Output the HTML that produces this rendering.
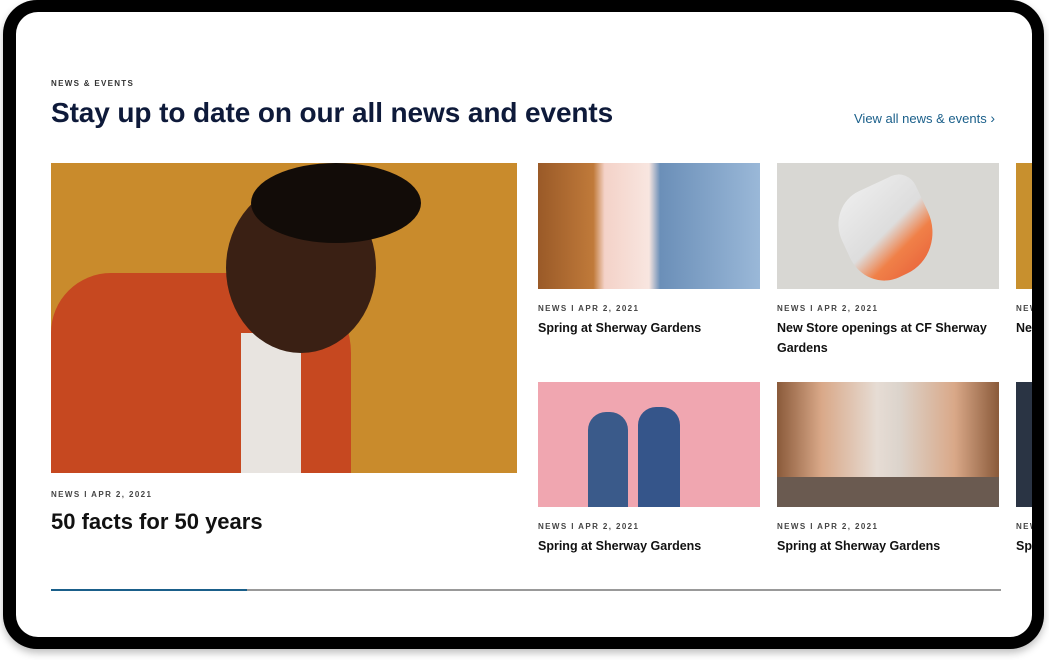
<!DOCTYPE html>
<html><head><style>
html,body{margin:0;padding:0;background:#fff;width:1049px;height:660px;overflow:hidden;font-family:"Liberation Sans",sans-serif}
.frame{position:absolute;left:3px;top:0;width:1041px;height:649px;background:#000;border-radius:34px;box-shadow:0 4px 8px rgba(0,0,0,.25)}
.screen{position:absolute;left:16px;top:12px;width:1016px;height:625px;background:#fff;border-radius:22px;overflow:hidden}
.a{position:absolute}
.eyebrow{left:35px;top:67px;font-size:8px;letter-spacing:1.3px;color:#333;font-weight:bold}
h1{position:absolute;left:35px;top:85px;margin:0;font-size:28px;color:#0e1a3a;font-weight:bold;letter-spacing:-.1px}
.view{left:838px;top:98px;font-size:13px;color:#1a5f8a}
.meta{font-size:8px;letter-spacing:1.4px;color:#444;font-weight:bold}
.t{font-size:12.5px;color:#111;font-weight:bold;line-height:20px}
.img{position:absolute}
</style></head><body>
<div class="frame"></div>
<div class="screen">
<div class="a eyebrow">NEWS &amp; EVENTS</div>
<h1>Stay up to date on our all news and events</h1>
<div class="a view">View all news &amp; events <span style="font-size:14px">&#8250;</span></div>

<div class="img" style="left:35px;top:151px;width:466px;height:310px;background:#c98b2c;overflow:hidden">
 <div class="a" style="left:0;top:110px;width:300px;height:200px;background:#c64820;border-radius:60px 80px 0 0"></div>
 <div class="a" style="left:190px;top:170px;width:60px;height:140px;background:#e8e4e0"></div>
 <div class="a" style="left:175px;top:20px;width:150px;height:170px;background:#3a2014;border-radius:50%"></div>
 <div class="a" style="left:200px;top:0;width:170px;height:80px;background:#120c08;border-radius:50%"></div>
</div>
<div class="a meta" style="left:35px;top:478px">NEWS I APR 2, 2021</div>
<div class="a" style="left:35px;top:497px;font-size:22px;font-weight:bold;color:#111">50 facts for 50 years</div>

<div class="img" style="left:522px;top:151px;width:222px;height:126px;background:linear-gradient(90deg,#9a5a28 0,#c07a3a 25%,#f4d2c8 30%,#f8e6e0 50%,#6b8fb8 55%,#9ab8d8 100%)"></div>
<div class="a meta" style="left:522px;top:292px">NEWS I APR 2, 2021</div>
<div class="a t" style="left:522px;top:306px">Spring at Sherway Gardens</div>

<div class="img" style="left:761px;top:151px;width:222px;height:126px;background:#d8d7d3">
 <div class="a" style="left:65px;top:20px;width:90px;height:95px;background:linear-gradient(160deg,#eee 0,#ddd 50%,#f08048 70%,#e8603a 100%);border-radius:40% 20% 50% 40%;transform:rotate(-25deg)"></div>
</div>
<div class="a meta" style="left:761px;top:292px">NEWS I APR 2, 2021</div>
<div class="a t" style="left:761px;top:306px;width:222px">New Store openings at CF Sherway Gardens</div>

<div class="img" style="left:1000px;top:151px;width:30px;height:126px;background:#c8902e"></div>
<div class="a meta" style="left:1000px;top:292px">NEWS</div>
<div class="a t" style="left:1000px;top:306px;width:60px">New Ga</div>

<div class="img" style="left:522px;top:370px;width:222px;height:125px;background:#f0a6b0">
 <div class="a" style="left:50px;top:30px;width:40px;height:95px;background:#3a5a8a;border-radius:18px 18px 0 0"></div>
 <div class="a" style="left:100px;top:25px;width:42px;height:100px;background:#35558a;border-radius:18px 18px 0 0"></div>
</div>
<div class="a meta" style="left:522px;top:510px">NEWS I APR 2, 2021</div>
<div class="a t" style="left:522px;top:524px">Spring at Sherway Gardens</div>

<div class="img" style="left:761px;top:370px;width:222px;height:125px;background:linear-gradient(90deg,#8a5a3a 0,#d9a888 20%,#e6dcd4 45%,#dcd4cc 55%,#d9a888 80%,#8a5a3a 100%)">
 <div class="a" style="left:0;top:95px;width:222px;height:30px;background:#6a5a50"></div>
</div>
<div class="a meta" style="left:761px;top:510px">NEWS I APR 2, 2021</div>
<div class="a t" style="left:761px;top:524px">Spring at Sherway Gardens</div>

<div class="img" style="left:1000px;top:370px;width:30px;height:125px;background:#2a3444"></div>
<div class="a meta" style="left:1000px;top:510px">NEWS</div>
<div class="a t" style="left:1000px;top:524px">Spring</div>

<div class="a" style="left:35px;top:577px;width:950px;height:2px;background:#999"></div>
<div class="a" style="left:35px;top:577px;width:196px;height:2px;background:#1a5f8a"></div>
</div>
</body></html>
